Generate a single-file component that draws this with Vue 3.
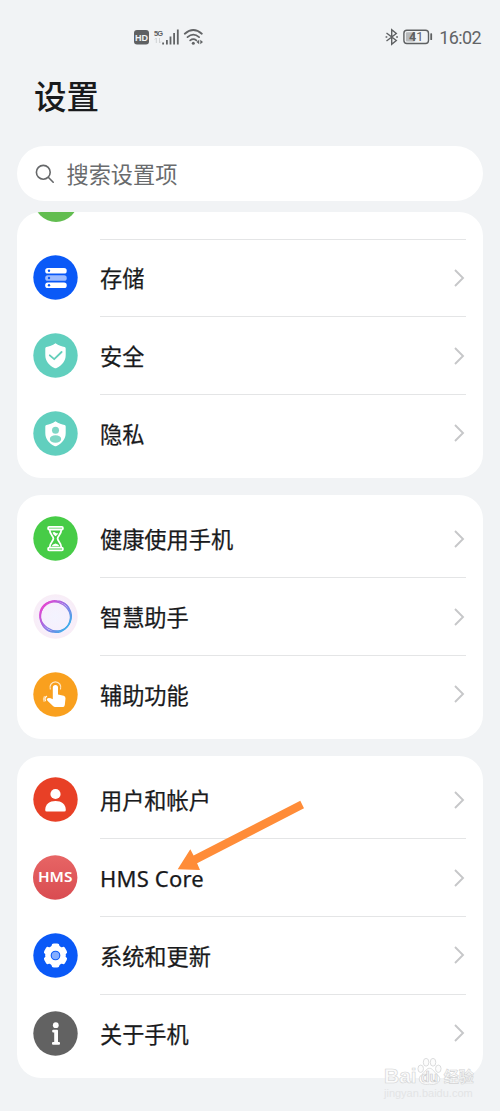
<template>
  <div class="screen">
    <header class="status-bar">
      <svg class="status-left" width="72" height="22" viewBox="0 0 72 22">
        <rect x="1" y="3" width="15" height="14.5" rx="3" fill="#5e6062" />
        <text x="8.5" y="13.7" class="hd" text-anchor="middle">HD</text>
        <text x="21" y="8.8" class="net">5G</text>
        <path d="M23.3 16v-5M21.8 12.5l1.5-1.5M26.5 11v5M28 14.5l-1.5 1.5" stroke="#d0d2d4" fill="none" />
        <g fill="#626466">
          <rect x="29.2" y="15.5" width="1.8" height="2" />
          <rect x="33" y="13" width="1.8" height="4.5" />
          <rect x="36.6" y="9.5" width="1.8" height="8" />
          <rect x="40.2" y="6" width="1.8" height="11.5" />
          <rect x="43.9" y="2.5" width="1.8" height="15" />
        </g>
        <g fill="none" stroke="#626466" stroke-width="1.8" stroke-linecap="round">
          <path d="M51.8 6.7Q60.3 -.6 68.8 6.7" />
          <path d="M54.5 10.1Q60.3 5.2 66.1 10.1" />
          <path d="M57.2 13.4Q60.3 11 63.4 13.4" />
        </g>
        <circle cx="60.3" cy="16.2" r="1.5" fill="#626466" />
        <path d="M66.2 12.7v4.6l-2.7-2.3zM67.3 12.7v4.6l2.7-2.3z" fill="#626466" />
      </svg>
      <div class="status-right">
        <svg width="48" height="20" viewBox="0 0 48 20">
          <path d="M1.5 6L11.3 13.5L6.7 17.2V2.8L11.3 6.5L1.5 14" fill="none" stroke="#5e6062" stroke-width="1.4" />
          <path d="M.6 10h1.7M11.2 10h1.7" stroke="#5e6062" stroke-width="1.5" />
          <rect x="18.9" y="3.3" width="24.6" height="13.2" rx="3" fill="none" stroke="#5e6062" stroke-width="1.4" />
          <rect x="20.9" y="5.3" width="9" height="9.2" rx="1" fill="#b7b9bb" />
          <text x="24" y="14.4" class="battery">4<tspan class="digit">1</tspan></text>
          <rect x="45.3" y="6.3" width="1.8" height="6.8" rx=".6" fill="#5e6062" />
        </svg>
        <span class="time">16:02</span>
      </div>
    </header>

    <h1>设置</h1>

    <div class="search">
      <svg width="20" height="20" viewBox="0 0 20 20" fill="none" stroke="#66686a" stroke-width="1.6">
        <circle cx="8.3" cy="8.3" r="6.9" />
        <path d="M13.5 13.5L18.2 18.2" stroke-linecap="round" />
      </svg>
      <span>搜索设置项</span>
    </div>

    <main>
      <section v-for="(group, index) in groups" :key="index" class="card">
        <div v-if="index === 0" class="partial-row">
          <div class="partial-icon"></div>
        </div>
        <div v-for="item in group" :key="item.icon" class="row">
          <svg class="icon" viewBox="0 0 45 45">
            <circle v-if="item.color" cx="22.5" cy="22.5" r="22.2" :fill="item.color" />

            <g v-if="item.icon === 'storage'">
              <rect x="12.2" y="13" width="21.5" height="5.6" rx="2.6" fill="#fff" />
              <rect x="12.2" y="20.2" width="21.5" height="5.6" rx="2.6" fill="#9dbcff" />
              <rect x="12.2" y="27.5" width="21.5" height="5.6" rx="2.6" fill="#fff" />
              <g fill="#0a59f7">
                <circle cx="16" cy="15.8" r="1.2" />
                <circle cx="16" cy="23" r="1.2" />
                <circle cx="16" cy="30.3" r="1.2" />
              </g>
            </g>

            <g v-else-if="item.icon === 'security' || item.icon === 'privacy'">
              <path d="M22.5 10.3C25.5 12.4 29 13.6 31.6 14.1Q32.7 14.4 32.7 15.5V22C32.7 28 29 32.5 23.6 34.9Q22.5 35.4 21.4 34.9C16 32.5 12.3 28 12.3 22V15.5Q12.3 14.4 13.4 14.1C16 13.6 19.5 12.4 22.5 10.3Z" fill="#fff" />
              <path v-if="item.icon === 'security'" d="M16.8 22.3L21.2 26.2L28.6 19" fill="none" stroke="#64cfba" stroke-width="1.8" stroke-linecap="round" stroke-linejoin="round" />
              <g v-else fill="#7ed7c5">
                <circle cx="22.5" cy="19.3" r="3.5" />
                <ellipse cx="22.5" cy="28" rx="5.7" ry="3.8" />
              </g>
            </g>

            <g v-else-if="item.icon === 'health'" fill="none" stroke="#fff" stroke-width="1.8" stroke-linejoin="round">
              <rect x="15.1" y="10.9" width="14.8" height="2.6" rx="1" />
              <rect x="15.1" y="31.7" width="14.8" height="2.6" rx="1" />
              <path d="M16.7 14C16.7 18.5 20.4 20 20.4 22.6S16.7 26.8 16.7 31.2M28.3 14C28.3 18.5 24.6 20 24.6 22.6S28.3 26.8 28.3 31.2" />
              <path d="M19.5 16.8Q21 15.5 22.5 16.7T25.5 16.8Q24.5 19 22.5 20.3Q20.5 19 19.5 16.8ZM18.5 30.3Q19.5 28 22.5 27.4Q25.5 28 26.5 30.3Z" fill="#fff" stroke="none" />
            </g>

            <g v-else-if="item.icon === 'assistant'" fill="none">
              <defs>
                <linearGradient id="ring" gradientUnits="userSpaceOnUse" x1="9" y1="9" x2="36" y2="32">
                  <stop offset="0" stop-color="#ee3fcd" />
                  <stop offset=".5" stop-color="#9a70e4" />
                  <stop offset="1" stop-color="#3dafea" />
                </linearGradient>
                <radialGradient id="glow">
                  <stop offset="0" stop-color="#f3f3ff" />
                  <stop offset=".75" stop-color="#f7effb" />
                  <stop offset="1" stop-color="#f8edf6" />
                </radialGradient>
              </defs>
              <circle cx="22.5" cy="22.5" r="22.2" fill="url(#glow)" />
              <g stroke="url(#ring)" stroke-width="1.3">
                <path d="M35.4 31.5A16 14 35 1 1 9.2 13.1A16 14 35 1 1 35.4 31.5Z" />
                <path d="M21.1 38.2A15.8 14 95 1 1 23.9 6.8A15.8 14 95 1 1 21.1 38.2Z" />
                <path d="M8.6 29.1A15.6 14 155 1 1 36.8 15.9A15.6 14 155 1 1 8.6 29.1Z" />
              </g>
            </g>

            <g v-else-if="item.icon === 'access'">
              <path d="M19.8 26V15.5a2.6 2.6 0 0 1 5.2 0v7.1l5.7 1.1q2 .5 1.8 2.7l-.7 6.5q-.3 2.2-2.4 2.2h-7.2q-1.3 0-2.2-1l-5.5-5.3q-1.5-1.8.2-2.6q1.8-.7 5.1 1z" fill="#fff" />
              <g fill="none" stroke="#fff" stroke-width="1.2" stroke-linecap="round">
                <path d="M17.3 17a5.4 5.4 0 1 1 10.2 0" opacity=".75" />
                <path d="M13.6 24.3q-2.6 1.8-1.2 4.4" opacity=".9" />
                <path d="M11.3 24.6q-1.6 2.3-.2 4.8" opacity=".6" />
              </g>
            </g>

            <g v-else-if="item.icon === 'user'" fill="#fff">
              <circle cx="22.5" cy="17" r="5.1" />
              <path d="M12.2 32.9C12.4 27 16.5 24 22.5 24S32.6 27 32.8 32.9Q32.8 34.4 31.3 34.4H13.7Q12.2 34.4 12.2 32.9Z" />
            </g>

            <g v-else-if="item.icon === 'hms'">
              <defs>
                <linearGradient id="hms-red" x1="0" y1="0" x2="0" y2="1">
                  <stop offset="0" stop-color="#e76565" />
                  <stop offset="1" stop-color="#d94c51" />
                </linearGradient>
              </defs>
              <circle cx="22.2" cy="22.5" r="22.2" fill="url(#hms-red)" />
              <text x="4.9" y="27.4" class="hms-logo" textLength="34.5" lengthAdjust="spacingAndGlyphs">HMS</text>
            </g>

            <g v-else-if="item.icon === 'system'">
              <g fill="#fff">
                <circle cx="22.5" cy="22.5" r="10.3" />
                <rect v-for="angle in [0, 60, 120, 180, 240, 300]" :key="angle" x="18.6" y="10.5" width="7.8" height="9" rx="2.2" :transform="`rotate(${angle} 22.5 22.5)`" />
              </g>
              <circle cx="22.5" cy="22.5" r="4.3" fill="#85adff" stroke="#0a59f7" stroke-width="1.1" />
            </g>

            <g v-else fill="#fff">
              <circle cx="22.8" cy="14.2" r="2.9" />
              <path d="M20.2 18.8H24Q25 18.8 25 19.8V31H26Q27 31 27 32V32.8Q27 33.7 26 33.7H20Q19 33.7 19 32.8V32Q19 31 20 31H21.2V21.4H20.2Q19.2 21.4 19.2 20.4V19.8Q19.2 18.8 20.2 18.8Z" />
            </g>
          </svg>
          <div class="row-body">
            <span class="label" :class="{ latin: item.icon === 'hms' }">{{ item.label }}</span>
            <svg class="chevron" width="12" height="20" viewBox="0 0 12 20">
              <path d="M2 2L10 10L2 18" />
            </svg>
          </div>
        </div>
      </section>
    </main>

    <svg class="arrow" width="130" height="74" viewBox="0 0 130 74">
      <path d="M2.7 71.3L15.3 51.3L18.6 57.5L125.3 2.7L129 10.3L22.1 65.2L25 72Z" fill="#ff8c38" />
    </svg>

    <div class="watermark">
      <div class="brand">
        <span>Bai</span>
        <svg width="25" height="30" viewBox="0 0 27 32">
          <ellipse cx="4" cy="12.5" rx="3" ry="4" />
          <ellipse cx="9.8" cy="5.5" rx="3" ry="4.2" />
          <ellipse cx="17.3" cy="5.5" rx="3" ry="4.2" />
          <ellipse cx="23" cy="12.5" rx="3" ry="4" />
          <path d="M13.5 12C17 12 18.5 16 22 19C28 24 23 31 13.5 29C4 31-1 24 5 19C8.5 16 10 12 13.5 12Z" />
          <text x="13.5" y="27" text-anchor="middle">du</text>
        </svg>
        <span class="jingyan">经验</span>
      </div>
      <div class="site">jingyan.baidu.com</div>
    </div>
  </div>
</template>

<script setup>
const groups = [
  [
    { icon: 'storage', label: '存储', color: '#0a59f7' },
    { icon: 'security', label: '安全', color: '#61cfbe' },
    { icon: 'privacy', label: '隐私', color: '#61cfbe' }
  ],
  [
    { icon: 'health', label: '健康使用手机', color: '#47cc47' },
    { icon: 'assistant', label: '智慧助手' },
    { icon: 'access', label: '辅助功能', color: '#f9a01e' }
  ],
  [
    { icon: 'user', label: '用户和帐户', color: '#e84026' },
    { icon: 'hms', label: 'HMS Core' },
    { icon: 'system', label: '系统和更新', color: '#0a59f7' },
    { icon: 'about', label: '关于手机', color: '#626262' }
  ]
];
</script>

<style>
body {
  margin: 0;
  background: #f1f3f5;
}
</style>

<style scoped>
.screen {
  position: relative;
  width: 500px;
  height: 1111px;
  box-sizing: border-box;
  padding: 0 17px;
  overflow: hidden;
  background: #f1f3f5;
  color: #191a1c;
  font-family: "Noto Sans CJK SC", sans-serif;
}

.status-bar {
  display: flex;
  justify-content: space-between;
  height: 71px;
  box-sizing: border-box;
  padding: 27px 2px 0 116px;
}

.status-right {
  display: flex;
  gap: 6px;
  height: 20px;
  align-items: center;
}

.time {
  padding-top: 2px;
  color: #626466;
  font: 18px/20px Roboto, sans-serif;
  letter-spacing: -0.6px;
}

.hd {
  fill: #f1f3f5;
  font: bold 9px "Liberation Sans", sans-serif;
}

.net {
  fill: #5e6062;
  font: bold 7.5px "Liberation Sans", sans-serif;
  letter-spacing: -1px;
}

.battery {
  fill: #5e6062;
  font: bold 12.5px Roboto, sans-serif;
}

.digit {
  font-weight: 400;
}

h1 {
  margin: 0;
  height: 75px;
  padding-left: 17px;
  font-size: 32.5px;
  font-weight: 500;
  line-height: 48px;
}

.search {
  display: flex;
  align-items: center;
  gap: 12px;
  height: 55px;
  box-sizing: border-box;
  padding-left: 17.5px;
  border-radius: 28px;
  background: #fff;
  color: #696b6d;
  font-size: 22.2px;
}

.search span {
  padding-bottom: 1px;
}

main {
  display: flex;
  flex-direction: column;
  gap: 17px;
  margin-top: 11px;
}

.card {
  padding: 5.5px 0;
  border-radius: 24px;
  background: #fff;
  overflow: hidden;
}

.card:first-child {
  padding-top: 0;
}

.partial-row {
  display: flex;
  align-items: flex-end;
  height: 26.5px;
  margin: 0 17px 0 83px;
  border-bottom: 1px solid #e4e5e6;
}

.partial-icon {
  width: 44px;
  height: 44px;
  margin: 0 0 17px -66px;
  border-radius: 50%;
  background: #62bd50;
}

.row {
  display: flex;
  align-items: center;
  height: 77.7px;
  padding: 0 17px 0 16px;
}

.icon {
  width: 45px;
  height: 45px;
  flex: none;
  margin: 0 22px 1px 0;
}

.row-body {
  flex: 1;
  display: flex;
  align-items: center;
  justify-content: space-between;
  height: 100%;
  box-sizing: border-box;
  border-bottom: 1px solid #e4e5e6;
}

.row:last-child .row-body {
  border-bottom-color: transparent;
}

.label {
  padding-bottom: 1px;
  font-size: 22.2px;
  line-height: 32px;
  -webkit-text-stroke: 0.25px #191a1c;
}

.latin {
  padding-bottom: 0;
  font-family: "Noto Sans", sans-serif;
  font-size: 22px;
  letter-spacing: 0.2px;
}

.chevron {
  margin-right: 1px;
  fill: none;
  stroke: #c6c7c9;
  stroke-width: 1.9;
}

.hms-logo {
  fill: #fff;
  font: 600 13.5px "Noto Sans", sans-serif;
}

.arrow {
  position: absolute;
  left: 175px;
  top: 798px;
}

.watermark {
  position: absolute;
  left: 384px;
  top: 1056px;
  font-family: "Liberation Sans", sans-serif;
}

.brand {
  display: flex;
  align-items: flex-end;
  height: 31px;
  color: #fbfbfb;
  font-size: 21px;
  font-weight: bold;
  line-height: 22px;
  -webkit-text-stroke: 0.6px #d2d3d4;
}

.brand svg {
  fill: #fcfcfc;
  stroke: #d8d9da;
  stroke-width: 1;
  overflow: visible;
}

.brand svg text {
  font-size: 15px;
  stroke: #cccdce;
  stroke-width: 0.8px;
}

.jingyan {
  margin-left: 2px;
  font-family: "Noto Sans CJK SC", sans-serif;
  font-size: 15px;
}

.site {
  color: #e3e4e5;
  font-size: 11px;
  line-height: 13px;
}
</style>
